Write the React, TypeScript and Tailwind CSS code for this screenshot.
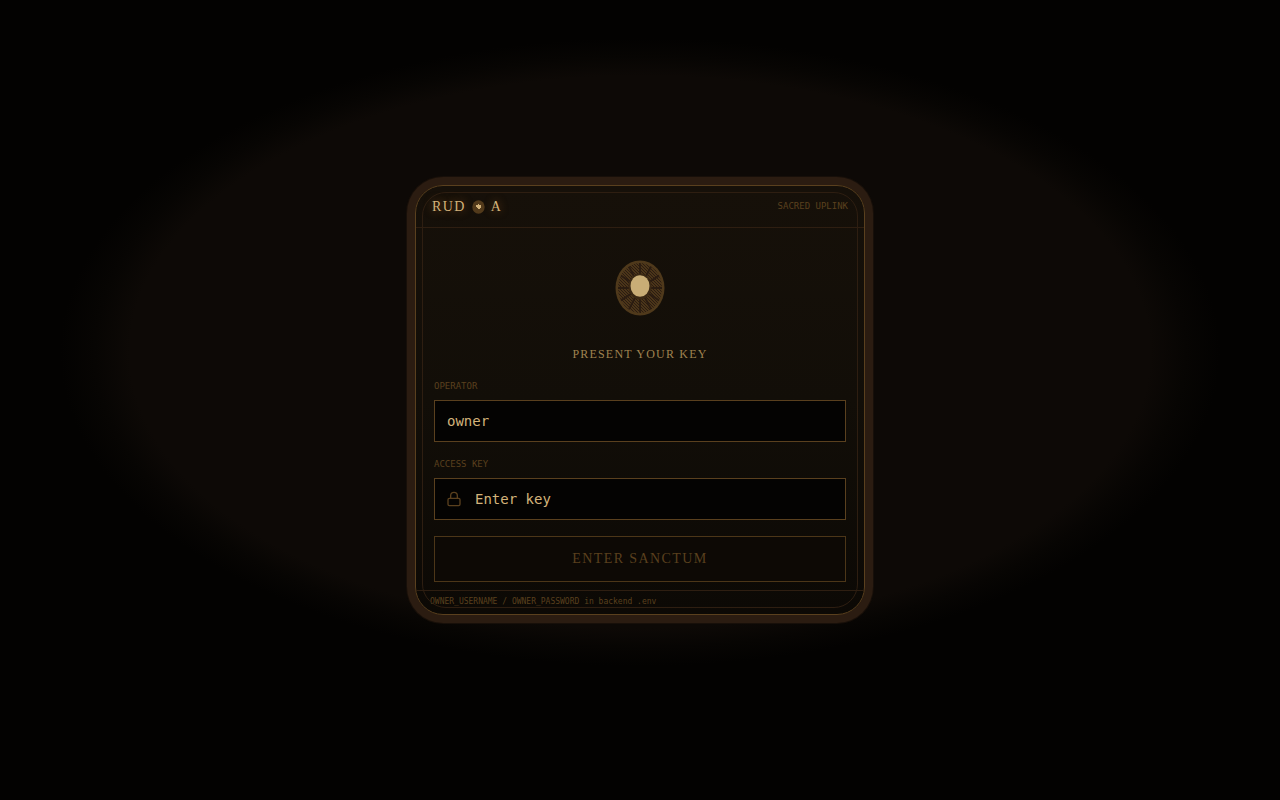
import { Lock } from "lucide-react";

const SPOKES = Array.from({ length: 12 }, (_, i) => i * 30);

function Orb() {
  return (
    <svg width="50" height="56" viewBox="0 0 50 56" aria-hidden="true">
      <defs>
        <pattern id="mesh" width="3" height="3" patternUnits="userSpaceOnUse">
          <rect width="3" height="3" fill="#4b3519" />
          <path d="M0 0h1v1h1v1h-1v-1h-1zM2 2h1v1h-1z" fill="#2b1c11" />
        </pattern>
      </defs>
      <ellipse cx="25" cy="28" rx="24.5" ry="27.5" fill="#4f391b" />
      <ellipse cx="25" cy="28" rx="22" ry="25" fill="url(#mesh)" />
      {SPOKES.map((angle) => (
        <line
          key={angle}
          x1="25"
          y1="18"
          x2="25"
          y2="6"
          stroke="#2b1c11"
          strokeWidth="1.8"
          transform={`translate(0 -3.4) scale(1 1.12) rotate(${angle} 25 28)`}
        />
      ))}
      <ellipse cx="25" cy="26.5" rx="11.5" ry="13" fill="#3a2814" />
      <ellipse cx="25" cy="26" rx="9.5" ry="10.8" fill="#c9ad76" />
    </svg>
  );
}

function LogoDot() {
  return (
    <svg width="13" height="14" viewBox="0 0 13 14" aria-hidden="true">
      <ellipse cx="6.5" cy="7" rx="6.2" ry="6.7" fill="#523a1b" />
      <path d="M6 4h1v1h2v3h-1v1h-2v-1h-1v-1h-1v-2h2z" fill="#d0b078" />
    </svg>
  );
}

export default function App() {
  return (
    <main className="flex min-h-screen items-center justify-center bg-[#030201] bg-[radial-gradient(ellipse_580px_314px_at_50%_44%,#0d0906_88%,#070503_94%,#030201_100%)] p-4 font-['DejaVu_Sans_Mono',monospace]">
      <section className="relative w-full max-w-[450px] rounded-[28px] border border-[#5a401e] bg-linear-to-b from-[#161009] via-[#120e08] to-[#0c0905] shadow-[0_0_0_8px_#2b1c11,0_0_0_9px_#170f09]">
        <div className="pointer-events-none absolute inset-1.5 rounded-3xl border border-[#2e1e11]" />

        <header className="flex h-[42px] items-center justify-between border-b border-[#2e1e11] px-4">
          <h1
            className="flex items-center gap-1.5 font-['Liberation_Serif',serif] text-sm tracking-widest text-[#d3b37a] [text-shadow:0_0_8px_#7a4a1c]"
            aria-label="RUD A"
          >
            <span>RUD</span>
            <LogoDot />
            <span>A</span>
          </h1>
          <p className="text-[9px] text-[#5a401e]">SACRED UPLINK</p>
        </header>

        <form className="px-[18px] pt-8 pb-2" onSubmit={(e) => e.preventDefault()}>
          <div className="flex justify-center">
            <Orb />
          </div>
          <h2 className="mt-[30px] text-center font-['Liberation_Serif',serif] text-xs leading-4 tracking-widest text-[#a08350]">
            PRESENT YOUR KEY
          </h2>

          <label htmlFor="operator" className="mt-[18px] block text-[9px] leading-3 text-[#5a401e]">
            OPERATOR
          </label>
          <input
            id="operator"
            type="text"
            defaultValue="owner"
            className="mt-2 block h-[42px] w-full border border-[#5a401e] bg-[#040302] px-3 text-sm text-[#d3b37a] outline-none"
          />

          <label htmlFor="key" className="mt-4 block text-[9px] leading-3 text-[#5a401e]">
            ACCESS KEY
          </label>
          <div className="mt-2 flex h-[42px] items-center gap-[13px] border border-[#5a401e] bg-[#040302] px-[11px]">
            <Lock size={16} strokeWidth={2} className="shrink-0 text-[#5a401e]" />
            <input
              id="key"
              type="password"
              placeholder="Enter key"
              className="w-full min-w-0 bg-transparent text-sm text-[#d3b37a] outline-none placeholder:text-[#d3b37a]"
            />
          </div>

          <button
            type="submit"
            className="mt-4 h-[46px] w-full border border-[#4c3618] bg-[#0d0905] font-['Liberation_Serif',serif] text-sm tracking-widest text-[#5a401e]"
          >
            ENTER SANCTUM
          </button>
        </form>

        <footer className="h-6 border-t border-[#2e1e11] px-3.5 text-[8px] leading-[22px] text-[#5a401e]">
          OWNER_USERNAME / OWNER_PASSWORD in backend .env
        </footer>
      </section>
    </main>
  );
}
